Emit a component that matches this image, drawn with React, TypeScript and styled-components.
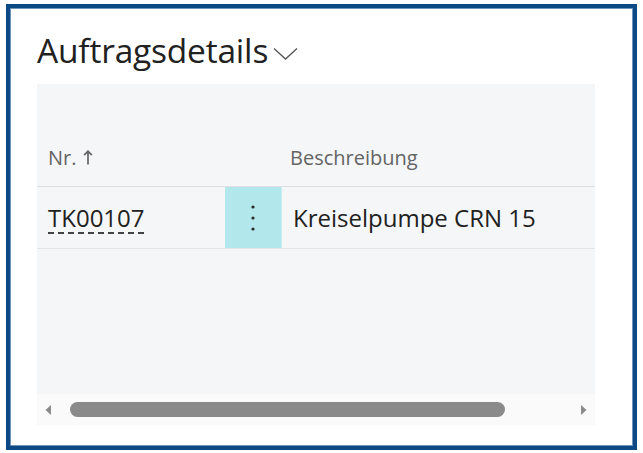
import React from 'react';
import styled, { createGlobalStyle } from 'styled-components';

const GlobalStyle = createGlobalStyle`
  html, body {
    margin: 0;
    padding: 0;
    background: #ffffff;
  }
  body {
    font-family: "Open Sans", "Noto Sans", "Liberation Sans", sans-serif;
    color: #212121;
  }
`;

const Frame = styled.div`
  box-sizing: border-box;
  width: 631px;
  height: 446px;
  margin: 4px 0 0 6px;
  border: 4px solid #0b4a84;
  box-shadow: inset 1px 1px 0 #6f93b8, inset -1px -1px 0 #6f93b8;
  display: flex;
  flex-direction: column;
  padding: 0 38px 21px 27px;
`;

const TitleRow = styled.div`
  height: 76px;
  display: flex;
  align-items: center;
  gap: 5px;
  padding-top: 8px;
  box-sizing: border-box;
`;

const Title = styled.h1`
  margin: 0;
  font-size: 33.5px;
  font-weight: 400;
  letter-spacing: -0.2px;
  color: #212121;
`;

const Panel = styled.div`
  flex: 1;
  background: #f5f6f8;
  display: flex;
  flex-direction: column;
`;

const Grid = styled.div<{ $height: number; $border: string }>`
  display: grid;
  grid-template-columns: 188px 56px 1fr;
  height: ${p => p.$height}px;
  border-bottom: 1px solid ${p => p.$border};
  box-sizing: border-box;
`;

const HeadCell = styled.div<{ $pad: number }>`
  display: flex;
  align-items: flex-end;
  gap: 6px;
  padding: 0 0 15px ${p => p.$pad}px;
  font-size: 20px;
  color: #646464;
  white-space: nowrap;
`;

const Cell = styled.div<{ $pad?: number; $accent?: boolean }>`
  display: flex;
  align-items: center;
  padding-left: ${p => p.$pad ?? 0}px;
  font-size: 24px;
  color: #212121;
  white-space: nowrap;
  border-left: ${p => (p.$accent ? '1px solid #c9eef1' : 'none')};
`;

const IdLink = styled.span`
  text-decoration: underline dashed #444;
  text-decoration-thickness: 2px;
  text-underline-offset: 5px;
`;

const MenuCell = styled.div`
  background: #b2e8ec;
  display: flex;
  align-items: center;
  justify-content: center;
`;

const Spacer = styled.div`
  flex: 1;
`;

const Scrollbar = styled.div`
  height: 31px;
  background: #fafafa;
  display: flex;
  align-items: center;
  padding: 0 8px 0 8px;
`;

const Track = styled.div`
  flex: 1;
  display: flex;
  align-items: center;
  padding: 0 19px 0 18px;
`;

const Thumb = styled.div`
  height: 15px;
  width: 435px;
  border-radius: 8px;
  background: #8a8a8a;
`;

const Chevron = () => (
  <svg width="25" height="14" viewBox="0 0 25 14" style={{ marginTop: 8 }}>
    <polyline points="1,1.5 12.5,12 24,1.5" fill="none" stroke="#555" strokeWidth="1.3" />
  </svg>
);

const UpArrow = () => (
  <svg width="10" height="15" viewBox="0 0 10 15" style={{ marginBottom: 6 }}>
    <path d="M5 1.5 L5 14.5 M1.2 5.2 L5 1.2 L8.8 5.2" fill="none" stroke="#646464" strokeWidth="1.7" />
  </svg>
);

const Dots = () => (
  <svg width="4" height="28" viewBox="0 0 4 28">
    <circle cx="2" cy="3" r="1.6" fill="#2b2b2b" />
    <circle cx="2" cy="14" r="1.6" fill="#2b2b2b" />
    <circle cx="2" cy="25" r="1.6" fill="#2b2b2b" />
  </svg>
);

const Arrow = ({ dir }: { dir: 'left' | 'right' }) => (
  <svg width="7" height="10" viewBox="0 0 7 10">
    {dir === 'left' ? (
      <polygon points="6,0 6,10 0.5,5" fill="#8a8a8a" />
    ) : (
      <polygon points="1,0 1,10 6.5,5" fill="#8a8a8a" />
    )}
  </svg>
);

export default function App() {
  return (
    <>
      <GlobalStyle />
      <Frame>
        <TitleRow>
          <Title>Auftragsdetails</Title>
          <Chevron />
        </TitleRow>
        <Panel>
          <Grid $height={103} $border="#dfe0e2">
            <HeadCell $pad={11}>
              Nr. <UpArrow />
            </HeadCell>
            <HeadCell $pad={0} />
            <HeadCell $pad={9}>Beschreibung</HeadCell>
          </Grid>
          <Grid $height={62} $border="#e3e4e6">
            <Cell $pad={11}>
              <IdLink>TK00107</IdLink>
            </Cell>
            <MenuCell>
              <Dots />
            </MenuCell>
            <Cell $pad={11} $accent>
              Kreiselpumpe CRN 15
            </Cell>
          </Grid>
          <Spacer />
          <Scrollbar>
            <Arrow dir="left" />
            <Track>
              <Thumb />
            </Track>
            <Arrow dir="right" />
          </Scrollbar>
        </Panel>
      </Frame>
    </>
  );
}
